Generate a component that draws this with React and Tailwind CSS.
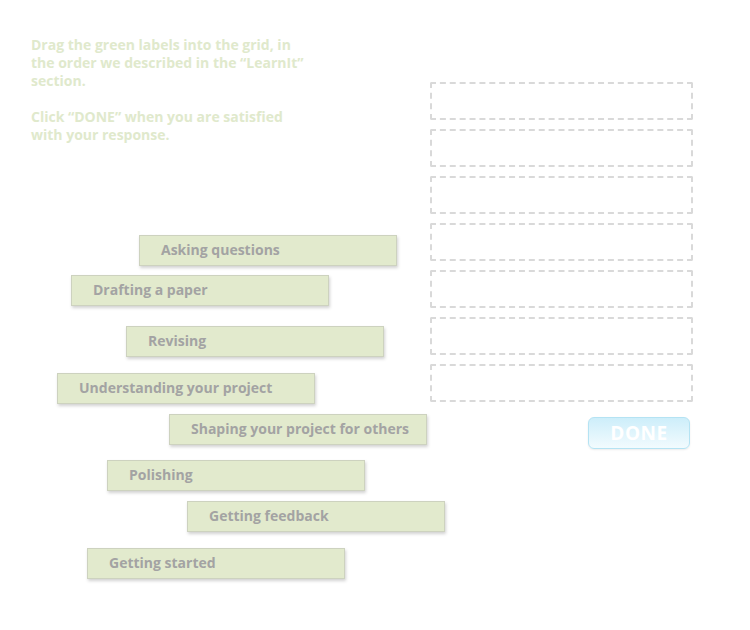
import React from 'react';

const labels = [
  { text: 'Asking questions', left: 139, top: 235 },
  { text: 'Drafting a paper', left: 71, top: 275 },
  { text: 'Revising', left: 126, top: 326 },
  { text: 'Understanding your project', left: 57, top: 373 },
  { text: 'Shaping your project for others', left: 169, top: 414 },
  { text: 'Polishing', left: 107, top: 460 },
  { text: 'Getting feedback', left: 187, top: 501 },
  { text: 'Getting started', left: 87, top: 548 },
];

const App = () => {
  const slots = [0, 1, 2, 3, 4, 5, 6];

  return (
    <div className="relative w-[750px] h-[630px] bg-white overflow-hidden font-['Open_Sans',sans-serif]">
      <div className="flex pl-[31px] pt-[36px]">
        {/* instructions */}
        <div className="w-[275px] text-[14px] leading-[18px] font-bold text-[#e0e9cc]">
          <p>Drag the green labels into the grid, in the order we described in the “LearnIt” section.</p>
          <p className="mt-[18px]">Click “DONE” when you are satisfied with your response.</p>
        </div>

        {/* drop grid */}
        <div className="ml-auto mr-[57px] mt-[46px] w-[263px] flex flex-col">
          <div className="flex flex-col gap-[9px]">
            {slots.map((i) => (
              <div key={i} className="h-[38px] border-2 border-dashed border-[#d9d9d9] rounded-[2px]" />
            ))}
          </div>
          <button className="self-end mt-[15px] mr-[3px] w-[102px] h-[32px] rounded-[6px] border border-[#b5e3f3] bg-gradient-to-b from-[#cdeefa] to-[#f2fbfe] text-white text-[19px] font-bold tracking-[0.5px] shadow-[0_1px_2px_rgba(0,0,0,0.08)]">
            DONE
          </button>
        </div>
      </div>

      {/* draggable labels */}
      {labels.map((l) => (
        <div
          key={l.text}
          className="absolute w-[258px] h-[31px] flex items-center pl-[21px] pb-[2px] bg-[#e2eacd] border border-[#cdd2bf] shadow-[1px_2px_3px_rgba(0,0,0,0.18)] text-[14px] font-bold text-[#a3a3a3]"
          style={{ left: l.left, top: l.top }}
        >
          {l.text}
        </div>
      ))}
    </div>
  );
};

export default App;
